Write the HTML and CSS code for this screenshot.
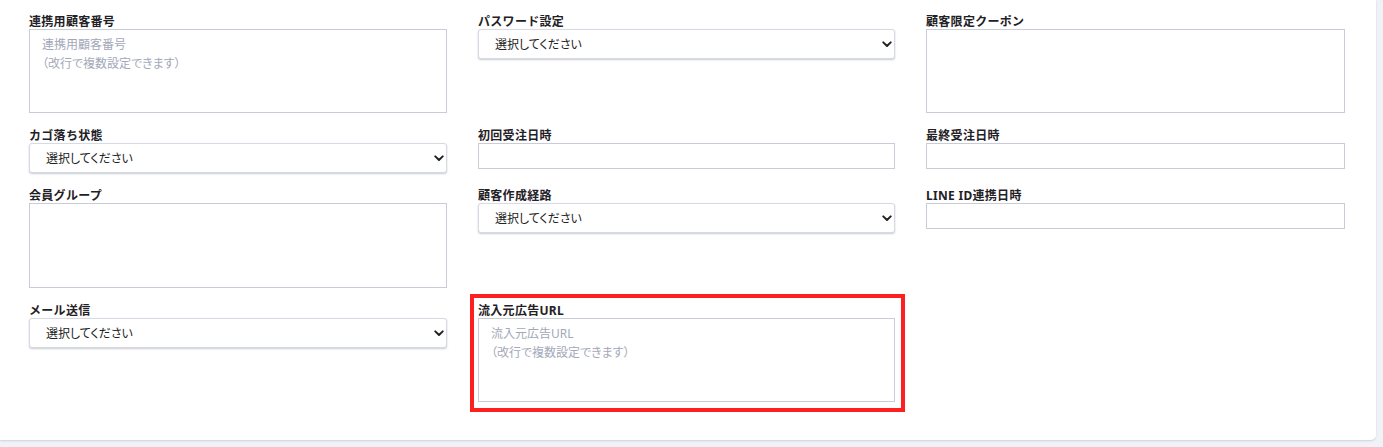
FILE: index.html
```html
<!DOCTYPE html>
<html lang="ja">
<head>
<meta charset="utf-8">
<title>顧客検索</title>
<link rel="stylesheet" href="styles.css">
</head>
<body>
<div class="page">
  <div class="card">
    <div class="form-grid">
      <div class="field">
        <label class="label">連携用顧客番号</label>
        <textarea class="textarea" placeholder="連携用顧客番号&#10;（改行で複数設定できます）"></textarea>
      </div>
      <div class="field">
        <label class="label">パスワード設定</label>
        <div class="select-wrap">
          <select class="select"><option>選択してください</option></select>
          <svg class="chev" width="10" height="7" viewBox="0 0 10 7"><path d="M1.3 1.4 L5 5 L8.7 1.4" fill="none" stroke="#222" stroke-width="2" stroke-linecap="round" stroke-linejoin="round"/></svg>
        </div>
      </div>
      <div class="field">
        <label class="label">顧客限定クーポン</label>
        <textarea class="textarea"></textarea>
      </div>

      <div class="field">
        <label class="label">カゴ落ち状態</label>
        <div class="select-wrap">
          <select class="select"><option>選択してください</option></select>
          <svg class="chev" width="10" height="7" viewBox="0 0 10 7"><path d="M1.3 1.4 L5 5 L8.7 1.4" fill="none" stroke="#222" stroke-width="2" stroke-linecap="round" stroke-linejoin="round"/></svg>
        </div>
      </div>
      <div class="field">
        <label class="label">初回受注日時</label>
        <input class="input" type="text">
      </div>
      <div class="field">
        <label class="label">最終受注日時</label>
        <input class="input" type="text">
      </div>

      <div class="field">
        <label class="label">会員グループ</label>
        <textarea class="textarea tall"></textarea>
      </div>
      <div class="field">
        <label class="label">顧客作成経路</label>
        <div class="select-wrap">
          <select class="select"><option>選択してください</option></select>
          <svg class="chev" width="10" height="7" viewBox="0 0 10 7"><path d="M1.3 1.4 L5 5 L8.7 1.4" fill="none" stroke="#222" stroke-width="2" stroke-linecap="round" stroke-linejoin="round"/></svg>
        </div>
      </div>
      <div class="field">
        <label class="label">LINE ID連携日時</label>
        <input class="input" type="text">
      </div>

      <div class="field">
        <label class="label">メール送信</label>
        <div class="select-wrap">
          <select class="select"><option>選択してください</option></select>
          <svg class="chev" width="10" height="7" viewBox="0 0 10 7"><path d="M1.3 1.4 L5 5 L8.7 1.4" fill="none" stroke="#222" stroke-width="2" stroke-linecap="round" stroke-linejoin="round"/></svg>
        </div>
      </div>
      <div class="field highlighted">
        <label class="label">流入元広告URL</label>
        <textarea class="textarea" placeholder="流入元広告URL&#10;（改行で複数設定できます）"></textarea>
      </div>
      <div class="field"></div>
    </div>
  </div>
</div>
</body>
</html>
```

FILE: styles.css
```css
* { box-sizing: border-box; }

html, body {
  margin: 0;
  padding: 0;
  background: #eff2f6;
}

body {
  font-family: "Noto Sans", "Noto Sans CJK JP", sans-serif;
  color: #222;
}

.page {
  width: 1383px;
  height: 447px;
  padding-right: 7px;
}

.card {
  background: #fff;
  height: 440px;
  border-radius: 0 0 5px 0;
  box-shadow: 0 1px 2px rgba(40, 50, 90, 0.16);
  padding: 15px 31px 0 29px;
}

.form-grid {
  display: grid;
  grid-template-columns: 418px 417px 419px;
  column-gap: 31px;
  row-gap: 16px;
  align-items: start;
}

.field {
  display: flex;
  flex-direction: column;
}

.label {
  font-size: 12px;
  font-weight: 700;
  line-height: 14px;
  letter-spacing: 0.3px;
  color: #1f2126;
  display: block;
}

.textarea {
  display: block;
  width: 100%;
  height: 84px;
  border: 1px solid #c9ccd7;
  border-radius: 0;
  padding: 6px 12px;
  font-family: "Noto Sans", "Noto Sans CJK JP", sans-serif;
  font-size: 12px;
  line-height: 18.5px;
  font-feature-settings: "palt";
  resize: none;
  color: #222;
  background: #fff;
  outline: none;
}

.textarea.tall {
  height: 85px;
}

.textarea::placeholder {
  color: #a3a8b8;
}

.input {
  display: block;
  width: 100%;
  height: 26px;
  border: 1px solid #c9ccd7;
  border-radius: 0;
  padding: 0 12px;
  font-family: "Noto Sans", "Noto Sans CJK JP", sans-serif;
  font-size: 12px;
  background: #fff;
  outline: none;
}

.select-wrap {
  position: relative;
}

.select {
  display: block;
  width: 100%;
  height: 30px;
  appearance: none;
  -webkit-appearance: none;
  border: 1px solid #d7dae2;
  border-radius: 3px;
  background: #fff;
  box-shadow: 0 1px 2px rgba(60, 70, 100, 0.28);
  padding: 0 20px 0 16px;
  font-family: "Noto Sans", "Noto Sans CJK JP", sans-serif;
  font-size: 12px;
  font-feature-settings: "palt";
  color: #222;
  outline: none;
}

.chev {
  position: absolute;
  right: 3px;
  top: 12px;
  pointer-events: none;
}

.highlighted {
  position: relative;
}

.highlighted::after {
  content: "";
  position: absolute;
  left: -8px;
  right: -10px;
  top: -10px;
  bottom: -10px;
  border: 4px solid #fd2020;
  pointer-events: none;
}
```
